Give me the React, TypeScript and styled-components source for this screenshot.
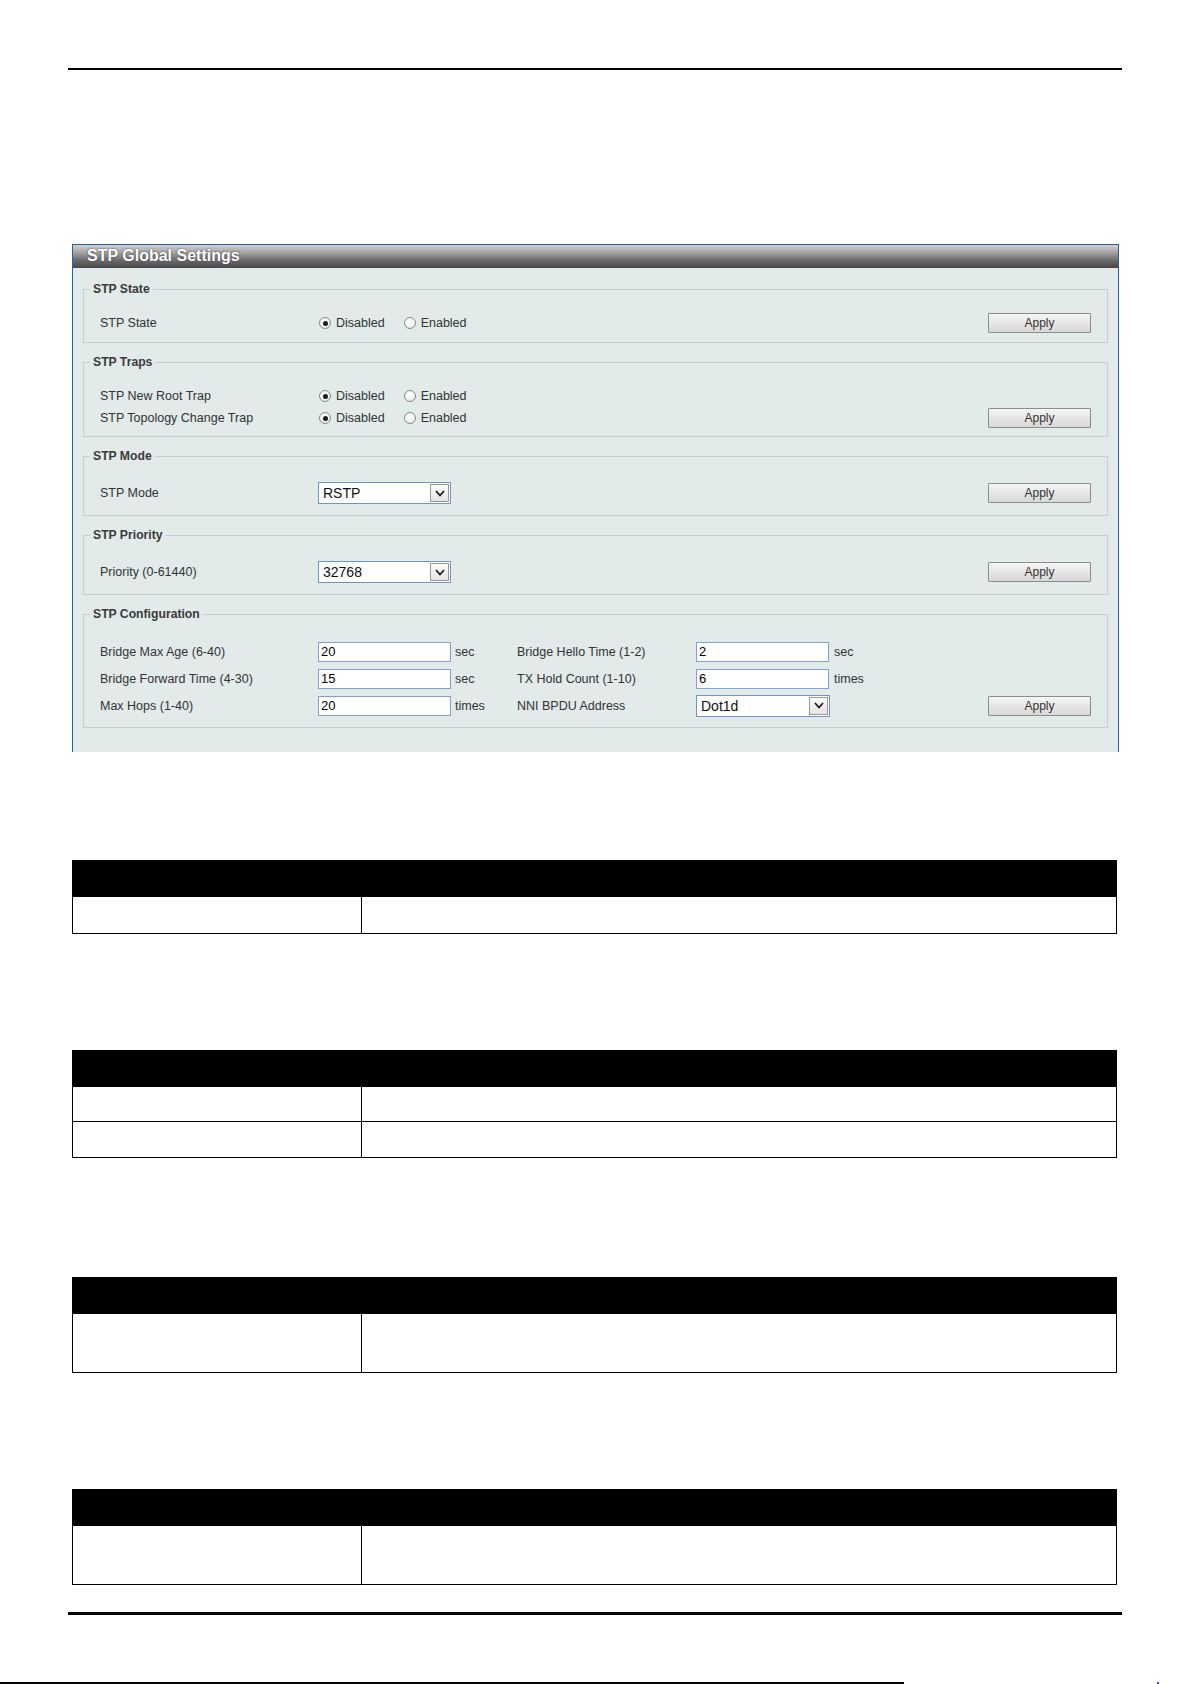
import styled, { createGlobalStyle } from 'styled-components'

const GlobalStyle = createGlobalStyle`
  html, body {
    margin: 0;
    padding: 0;
    background: #fff;
  }
  body {
    font-family: "Liberation Sans", Arial, sans-serif;
  }
`

type TableSpec = {
  gap: number
  rows: number[]
}

const tables: TableSpec[] = [
  { gap: 108, rows: [36] },
  { gap: 116, rows: [34, 35] },
  { gap: 119, rows: [58] },
  { gap: 116, rows: [58] },
]

function Radio({ checked, label }: { checked?: boolean; label: string }) {
  return (
    <Choice>
      <Dot $checked={checked} />
      {label}
    </Choice>
  )
}

function Toggle() {
  return (
    <Choices>
      <Radio checked label='Disabled' />
      <Radio label='Enabled' />
    </Choices>
  )
}

function Dropdown({ value, width = 133 }: { value: string; width?: number }) {
  return (
    <Select $width={width}>
      <span>{value}</span>
      <SelectButton>
        <svg width='10' height='7' viewBox='0 0 10 7'>
          <polyline points='1,1 5,5.5 9,1' fill='none' stroke='#1a1a1a' strokeWidth='1.8' />
        </svg>
      </SelectButton>
    </Select>
  )
}

export default function App() {
  return (
    <Page>
      <GlobalStyle />
      <Content>
        <TopRule />
        <Panel>
          <TitleBar>STP Global Settings</TitleBar>
          <Groups>
            <Group $pb={9}>
              <Legend>STP State</Legend>
              <Row $h={20}>
                <Label>STP State</Label>
                <Toggle />
                <Apply>Apply</Apply>
              </Row>
            </Group>

            <Group $pb={8}>
              <Legend>STP Traps</Legend>
              <Stack>
                <Row $h={20}>
                  <Label>STP New Root Trap</Label>
                  <Toggle />
                </Row>
                <Row $h={20}>
                  <Label>STP Topology Change Trap</Label>
                  <Toggle />
                  <Apply>Apply</Apply>
                </Row>
              </Stack>
            </Group>

            <Group $pb={9}>
              <Legend>STP Mode</Legend>
              <Row $h={26}>
                <Label>STP Mode</Label>
                <Dropdown value='RSTP' />
                <Apply>Apply</Apply>
              </Row>
            </Group>

            <Group $pb={9}>
              <Legend>STP Priority</Legend>
              <Row $h={26}>
                <Label>Priority (0-61440)</Label>
                <Dropdown value='32768' />
                <Apply>Apply</Apply>
              </Row>
            </Group>

            <Group $pb={8}>
              <Legend>STP Configuration</Legend>
              <ConfigGrid>
                <Label>Bridge Max Age (6-40)</Label>
                <Field defaultValue='20' />
                <Unit>sec</Unit>
                <Label>Bridge Hello Time (1-2)</Label>
                <Field defaultValue='2' />
                <Unit>sec</Unit>
                <span />

                <Label>Bridge Forward Time (4-30)</Label>
                <Field defaultValue='15' />
                <Unit>sec</Unit>
                <Label>TX Hold Count (1-10)</Label>
                <Field defaultValue='6' />
                <Unit>times</Unit>
                <span />

                <Label>Max Hops (1-40)</Label>
                <Field defaultValue='20' />
                <Unit>times</Unit>
                <Label>NNI BPDU Address</Label>
                <Dropdown value='Dot1d' width={134} />
                <span />
                <Apply>Apply</Apply>
              </ConfigGrid>
            </Group>
          </Groups>
        </Panel>

        {tables.map((t, i) => (
          <DocTable key={i} $gap={t.gap}>
            <thead>
              <tr>
                <HeadCell $first />
                <HeadCell />
              </tr>
            </thead>
            <tbody>
              {t.rows.map((h, j) => (
                <tr key={j}>
                  <Cell $h={h} />
                  <Cell $h={h} />
                </tr>
              ))}
            </tbody>
          </DocTable>
        ))}

        <BottomRule />
      </Content>
      <EdgeStrip>
        <EdgeLine />
        <EdgeMark />
      </EdgeStrip>
    </Page>
  )
}

const Page = styled.div`
  width: 1192px;
  height: 1684px;
  display: flex;
  flex-direction: column;
  justify-content: space-between;
  overflow: hidden;
`

const Content = styled.div`
  display: flex;
  flex-direction: column;
  align-items: flex-start;
  padding: 68px 0 0 68px;
`

const TopRule = styled.div`
  width: 1054px;
  height: 2px;
  background: #000;
`

const Panel = styled.div`
  margin: 174px 0 0 4px;
  width: 1047px;
  box-sizing: border-box;
  border: 1px solid #2d5f97;
  border-bottom: none;
  background: #e2eaea;
  padding-bottom: 24px;
`

const TitleBar = styled.div`
  height: 23px;
  line-height: 22px;
  padding-left: 14px;
  font-size: 16px;
  font-weight: bold;
  color: #fff;
  text-shadow: 0 0 2px #3a3a3a;
  background: linear-gradient(180deg, #d2d2d2 0%, #a8a8a8 30%, #6e6e6e 65%, #474747 100%);
`

const Groups = styled.div`
  display: flex;
  flex-direction: column;
  gap: 12px;
  margin: 14px 10px 0;
`

const Group = styled.fieldset<{ $pb: number }>`
  margin: 0;
  min-width: 0;
  padding: 17px 0 ${p => p.$pb}px 0;
  border: 1px solid #c4d0d0;
`

const Legend = styled.legend`
  margin-left: 6px;
  padding: 0 3px;
  font-size: 12.2px;
  font-weight: bold;
  line-height: 14px;
  color: #3a3a3a;
`

const Stack = styled.div`
  display: flex;
  flex-direction: column;
  gap: 2px;
`

const Row = styled.div<{ $h: number }>`
  display: flex;
  align-items: center;
  height: ${p => p.$h}px;
  padding: 0 16px;
`

const Label = styled.span`
  width: 218px;
  flex-shrink: 0;
  font-size: 12.5px;
  color: #333;
  white-space: nowrap;
`

const Choices = styled.div`
  display: flex;
  align-items: center;
  gap: 18px;
`

const Choice = styled.label`
  display: inline-flex;
  align-items: center;
  gap: 5px;
  font-size: 12.5px;
  color: #333;
  margin-left: 1px;
`

const Dot = styled.span<{ $checked?: boolean }>`
  position: relative;
  width: 12px;
  height: 12px;
  box-sizing: border-box;
  border-radius: 50%;
  border: 1px solid #8a8a8a;
  background: radial-gradient(circle at 40% 35%, #ffffff 0%, #f2f2f2 55%, #d8d8d8 100%);

  &::after {
    content: '';
    display: ${p => (p.$checked ? 'block' : 'none')};
    position: absolute;
    left: 2.5px;
    top: 2.5px;
    width: 5px;
    height: 5px;
    border-radius: 50%;
    background: #1c1c1c;
  }
`

const Apply = styled.button`
  margin-left: auto;
  width: 103px;
  height: 20px;
  padding: 0;
  box-sizing: border-box;
  border: 1px solid #8c8c8c;
  border-radius: 1px;
  background: linear-gradient(180deg, #f6f6f6 0%, #e6e6e6 50%, #d8d8d8 100%);
  font-family: inherit;
  font-size: 12px;
  color: #333;
  cursor: pointer;
`

const Select = styled.div<{ $width: number }>`
  width: ${p => p.$width}px;
  height: 22px;
  box-sizing: border-box;
  display: flex;
  align-items: center;
  justify-content: space-between;
  padding: 0 1px 0 4px;
  border: 1px solid #6b97cb;
  background: #fff;
  font-size: 14px;
  color: #111;
`

const SelectButton = styled.span`
  width: 19px;
  height: 18px;
  box-sizing: border-box;
  display: flex;
  align-items: center;
  justify-content: center;
  border: 1px solid #9a9a9a;
  background: linear-gradient(180deg, #fbfbfb 0%, #e4e4e4 100%);
`

const ConfigGrid = styled.div`
  display: grid;
  grid-template-columns: 218px 133px 66px 179px 134px 1fr 103px;
  grid-auto-rows: 27px;
  align-items: center;
  padding: 0 16px;
`

const Field = styled.input`
  width: 133px;
  height: 20px;
  box-sizing: border-box;
  margin: 0;
  padding: 0 2px;
  border: 1px solid #7ea3cf;
  background: #fff;
  font-family: inherit;
  font-size: 13px;
  color: #000;
  outline: none;
`

const Unit = styled.span`
  padding-left: 4px;
  font-size: 12.5px;
  color: #333;
`

const DocTable = styled.table<{ $gap: number }>`
  margin: ${p => p.$gap}px 0 0 4px;
  width: 1045px;
  border-collapse: collapse;
  table-layout: fixed;
`

const HeadCell = styled.th<{ $first?: boolean }>`
  width: ${p => (p.$first ? '288px' : 'auto')};
  height: 35px;
  padding: 0;
  background: #000;
  border: 1px solid #000;
`

const Cell = styled.td<{ $h: number }>`
  height: ${p => p.$h}px;
  padding: 0;
  border: 1px solid #000;
`

const BottomRule = styled.div`
  margin-top: 27px;
  width: 1054px;
  height: 3px;
  background: #000;
`

const EdgeStrip = styled.div`
  display: flex;
  align-items: flex-end;
  height: 3px;
`

const EdgeLine = styled.div`
  width: 904px;
  height: 2px;
  background: #000;
`

const EdgeMark = styled.div`
  margin-left: 253px;
  width: 2px;
  height: 2px;
  background: #5a4fd0;
`
